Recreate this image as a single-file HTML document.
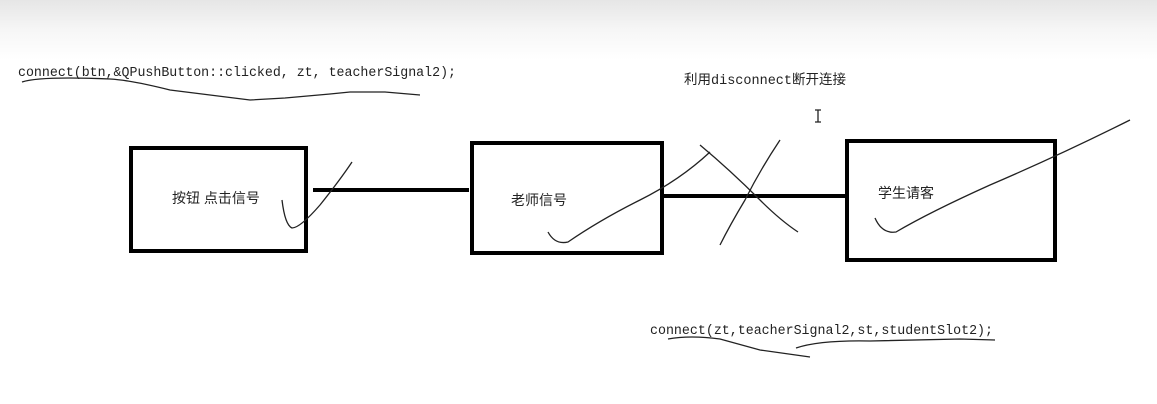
<!DOCTYPE html>
<html><head><meta charset="utf-8"><style>
html,body{margin:0;padding:0}
body{width:1157px;height:404px;overflow:hidden;background:linear-gradient(#e6e6e6 0px,#f6f6f6 30px,#fff 60px,#fff 100%);position:relative}
svg{position:absolute;left:0;top:0}
text{font-family:"Liberation Mono","Noto Sans CJK SC",monospace;fill:#222}
.cn{font-family:"Liberation Sans","Noto Sans CJK SC",sans-serif;font-size:14px}
</style></head><body>
<svg width="1157" height="404" viewBox="0 0 1157 404">
<g fill="none" stroke="#000" stroke-width="4">
<rect x="131" y="148" width="175" height="103"/>
<rect x="472" y="143" width="190" height="110"/>
<rect x="847" y="141" width="208" height="119"/>
<line x1="313" y1="190" x2="469" y2="190"/>
<line x1="664" y1="196" x2="845" y2="196"/>
</g>
<g fill="none" stroke="#222" stroke-width="1.3">
<path d="M22 82 Q40 76 110 79 Q130 80 170 90 L250 100 L285 98 L330 94 L350 92 L385 92 L420 95"/>
<path d="M668 339 Q690 335 720 339 L760 350 L810 357"/>
<path d="M796 348 Q820 340 870 341 L960 339 L995 340"/>
<path d="M282 200 Q285 225 292 228 Q300 228 320 205 Q340 180 352 162"/>
<path d="M548 232 Q555 245 568 242 Q600 220 640 200 Q680 180 710 152"/>
<path d="M875 218 Q882 234 896 232 Q930 212 990 185 Q1060 155 1130 120"/>
<path d="M700 145 Q730 170 760 200 Q780 220 798 232"/>
<path d="M780 140 Q760 170 745 200 Q730 225 720 245"/>
<path d="M818 110 v12 M815 110 h6 M815 122 h6"/>
</g>
<text x="18" y="76" font-size="13.5" textLength="438" lengthAdjust="spacingAndGlyphs">connect(btn,&amp;QPushButton::clicked, zt, teacherSignal2);</text>
<text x="650" y="334" font-size="13.5" textLength="343" lengthAdjust="spacingAndGlyphs">connect(zt,teacherSignal2,st,studentSlot2);</text>
<text x="684" y="84" font-size="13.5">利用disconnect断开连接</text>
<text class="cn" x="172" y="203">按钮 点击信号</text>
<text class="cn" x="511" y="205">老师信号</text>
<text class="cn" x="878" y="198">学生请客</text>
</svg>
</body></html>
